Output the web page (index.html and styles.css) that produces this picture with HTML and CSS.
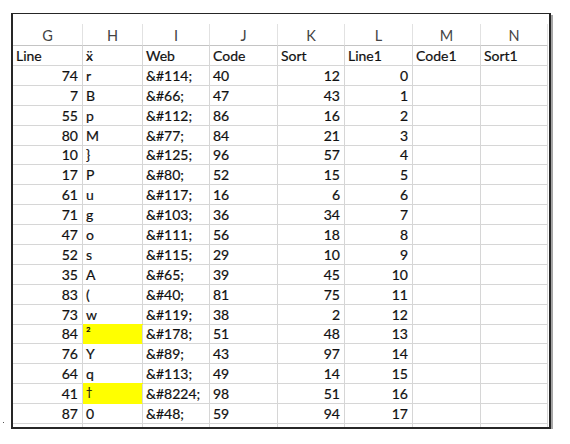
FILE: index.html
```html
<!DOCTYPE html>
<html>
<head>
<meta charset="utf-8">
<link rel="stylesheet" href="styles.css">
</head>
<body>
<span class="speck"></span>
<div class="sheet">
  <div class="grid">
    <div class="c h">G</div><div class="c h">H</div><div class="c h">I</div><div class="c h">J</div><div class="c h">K</div><div class="c h">L</div><div class="c h">M</div><div class="c h">N</div>

    <div class="c">Line</div><div class="c"><span class="odd">ẍ̤</span></div><div class="c">Web</div><div class="c">Code</div><div class="c">Sort</div><div class="c">Line1</div><div class="c">Code1</div><div class="c">Sort1</div>

    <div class="c n">74</div><div class="c">r</div><div class="c">&amp;#114;</div><div class="c">40</div><div class="c n">12</div><div class="c n">0</div><div class="c"></div><div class="c"></div>
    <div class="c n">7</div><div class="c">B</div><div class="c">&amp;#66;</div><div class="c">47</div><div class="c n">43</div><div class="c n">1</div><div class="c"></div><div class="c"></div>
    <div class="c n">55</div><div class="c">p</div><div class="c">&amp;#112;</div><div class="c">86</div><div class="c n">16</div><div class="c n">2</div><div class="c"></div><div class="c"></div>
    <div class="c n">80</div><div class="c">M</div><div class="c">&amp;#77;</div><div class="c">84</div><div class="c n">21</div><div class="c n">3</div><div class="c"></div><div class="c"></div>
    <div class="c n">10</div><div class="c">}</div><div class="c">&amp;#125;</div><div class="c">96</div><div class="c n">57</div><div class="c n">4</div><div class="c"></div><div class="c"></div>
    <div class="c n">17</div><div class="c">P</div><div class="c">&amp;#80;</div><div class="c">52</div><div class="c n">15</div><div class="c n">5</div><div class="c"></div><div class="c"></div>
    <div class="c n">61</div><div class="c">u</div><div class="c">&amp;#117;</div><div class="c">16</div><div class="c n">6</div><div class="c n">6</div><div class="c"></div><div class="c"></div>
    <div class="c n">71</div><div class="c">g</div><div class="c">&amp;#103;</div><div class="c">36</div><div class="c n">34</div><div class="c n">7</div><div class="c"></div><div class="c"></div>
    <div class="c n">47</div><div class="c">o</div><div class="c">&amp;#111;</div><div class="c">56</div><div class="c n">18</div><div class="c n">8</div><div class="c"></div><div class="c"></div>
    <div class="c n">52</div><div class="c">s</div><div class="c">&amp;#115;</div><div class="c">29</div><div class="c n">10</div><div class="c n">9</div><div class="c"></div><div class="c"></div>
    <div class="c n">35</div><div class="c">A</div><div class="c">&amp;#65;</div><div class="c">39</div><div class="c n">45</div><div class="c n">10</div><div class="c"></div><div class="c"></div>
    <div class="c n">83</div><div class="c">(</div><div class="c">&amp;#40;</div><div class="c">81</div><div class="c n">75</div><div class="c n">11</div><div class="c"></div><div class="c"></div>
    <div class="c n">73</div><div class="c">w</div><div class="c">&amp;#119;</div><div class="c">38</div><div class="c n">2</div><div class="c n">12</div><div class="c"></div><div class="c"></div>
    <div class="c n">84</div><div class="c hl"><span class="sup">²</span></div><div class="c">&amp;#178;</div><div class="c">51</div><div class="c n">48</div><div class="c n">13</div><div class="c"></div><div class="c"></div>
    <div class="c n">76</div><div class="c">Y</div><div class="c">&amp;#89;</div><div class="c">43</div><div class="c n">97</div><div class="c n">14</div><div class="c"></div><div class="c"></div>
    <div class="c n">64</div><div class="c">q</div><div class="c">&amp;#113;</div><div class="c">49</div><div class="c n">14</div><div class="c n">15</div><div class="c"></div><div class="c"></div>
    <div class="c n">41</div><div class="c hl"><span class="dag">†</span></div><div class="c">&amp;#8224;</div><div class="c">98</div><div class="c n">51</div><div class="c n">16</div><div class="c"></div><div class="c"></div>
    <div class="c n">87</div><div class="c">0</div><div class="c">&amp;#48;</div><div class="c">59</div><div class="c n">94</div><div class="c n">17</div><div class="c"></div><div class="c"></div>

    <div class="c stub"></div><div class="c stub"></div><div class="c stub"></div><div class="c stub"></div><div class="c stub"></div><div class="c stub"></div><div class="c stub"></div><div class="c stub"></div>
  </div>
</div>
</body>
</html>
```

FILE: styles.css
```css
html, body {
  margin: 0;
  padding: 0;
  background: #ffffff;
}

body {
  font-family: Lato, "Open Sans", "Liberation Sans", sans-serif;
  color: #111111;
  padding-top: 13px;
  padding-left: 11px;
}

.speck {
  position: absolute;
  left: 3px;
  top: 422px;
  width: 1px;
  height: 1px;
  background: #555555;
}

.sheet {
  width: 536px;
  border: 2px solid #262626;
  border-top-width: 1px;
  box-shadow: 2px 2px 0 #a6a6a6;
  padding-top: 10px;
}

.grid {
  display: grid;
  grid-template-columns: 70px 60px 67px 68px 67px 68px 68px 67px;
  grid-template-rows: 22px 20px repeat(18, 19.9px) 3px;
}

.c {
  box-sizing: border-box;
  border-right: 1px solid #d6d6d6;
  border-bottom: 1px solid #d6d6d6;
  display: flex;
  align-items: flex-end;
  padding: 0 2px 1px 3px;
  font-size: 14px;
  line-height: 16px;
  white-space: nowrap;
  overflow: hidden;
  -webkit-text-stroke: 0.2px #111111;
}

.n {
  justify-content: flex-end;
  padding-right: 4px;
}

.h {
  justify-content: center;
  align-items: center;
  padding: 2px 0 0 0;
  color: #444444;
  -webkit-text-stroke: 0;
  font-size: 14.5px;
  border-right-color: #e2e2e2;
  border-bottom-color: #c4c4c4;
}

.odd {
  font-size: 14px;
  line-height: 16px;
}

.hl {
  background: #ffff00;
  border-bottom-color: #ffff00;
  box-shadow: 0 -1px 0 #ffff00;
  align-items: flex-start;
}

.sup {
  font-size: 14px;
  line-height: 16px;
}

.dag {
  font-size: 11px;
  line-height: 11px;
  padding-top: 2px;
}

.stub {
  border-bottom: none;
}
```
